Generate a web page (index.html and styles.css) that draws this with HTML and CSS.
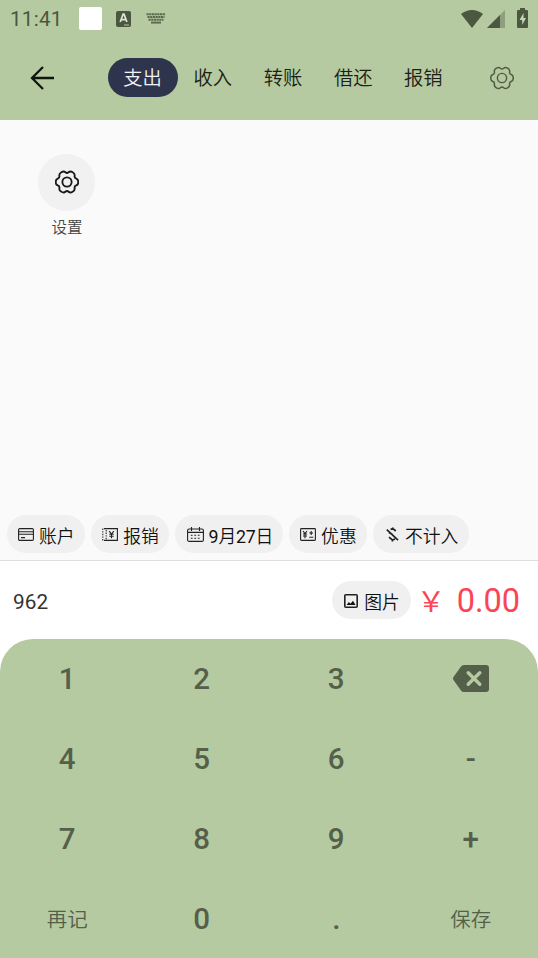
FILE: index.html
```html
<!DOCTYPE html>
<html lang="zh-CN">
<head>
<meta charset="utf-8">
<title>记账</title>
<link rel="stylesheet" href="styles.css">
</head>
<body>
<svg class="defs" aria-hidden="true">
  <symbol id="gear" viewBox="-13 -13 26 26">
    <path d="M12.23 0Q12.23 3.05 10.01 3.78Q7.79 4.5 8.27 6.78Q8.75 9.06 6.11 10.59Q3.47 12.11 1.74 10.56Q0 9-1.74 10.56Q-3.47 12.11-6.11 10.59Q-8.75 9.06-8.27 6.78Q-7.79 4.5-10.01 3.78Q-12.23 3.05-12.23 0Q-12.23-3.05-10.01-3.78Q-7.79-4.5-8.27-6.78Q-8.75-9.06-6.11-10.59Q-3.47-12.11-1.74-10.56Q0-9 1.74-10.56Q3.47-12.11 6.11-10.59Q8.75-9.06 8.27-6.78Q7.79-4.5 10.01-3.78Q12.23-3.05 12.23 0Z"/>
    <circle r="5"/>
  </symbol>
</svg>
<header class="header">
  <div class="status">
    <span class="clock">11:41</span>
    <span class="notice"></span>
    <svg class="ime" width="15" height="16" viewBox="0 0 15 16"><rect width="15" height="16" rx="2" fill="#4b573f"/><path d="M4.2 11 7.1 3.2h.9L10.9 11M5.2 8.6h4.6" fill="none" stroke="#dce6d2" stroke-width="1.7"/><path d="M8 14h5" stroke="#b5caa0"/></svg>
    <svg class="keyboard" width="20" height="11" viewBox="0 0 20 11" fill="none" stroke="#5c694e" stroke-width="1.9"><path d="M.5 1.2h19" stroke-dasharray="2.2 .5"/><path d="M1.5 4h17M2.5 6.8h15" stroke-dasharray="2.2 .5"/><path d="M5 9.6h10"/></svg>
    <span class="signals">
      <svg width="22" height="18" viewBox="0 0 22 18"><path d="M0 4Q11-4 22 4L11 18Z" fill="#4b573f"/></svg>
      <svg width="18" height="18" viewBox="0 0 18 18"><path d="M0 18 18 0v18Z" fill="#8d9f7c"/><path d="M0 18 13 5v13Z" fill="#4b573f"/></svg>
      <svg class="battery" width="11" height="20" viewBox="0 0 11 20"><path d="M3 0h5v2h2q1 0 1 1v16q0 1-1 1H1q-1 0-1-1V3q0-1 1-1h2Z" fill="#4b573f"/><path d="M6.5 5 2.5 12h2.7v5l3.8-7H6.5Z" fill="#c5d5b5"/></svg>
    </span>
  </div>
  <nav class="toolbar">
    <svg class="back" width="24" height="24" viewBox="0 0 24 24" fill="none" stroke="#11150e" stroke-width="2.3"><path d="M24 12H2M13 1 2 12l11 11"/></svg>
    <div class="tabs">
      <span class="tab active">支出</span><span class="tab">收入</span><span class="tab">转账</span><span class="tab">借还</span><span class="tab">报销</span>
    </div>
    <svg class="gear toolbar-gear" width="24" height="24"><use href="#gear"/></svg>
  </nav>
</header>
<main class="content">
  <div class="category">
    <span class="category-icon"><svg class="gear" width="24" height="24"><use href="#gear"/></svg></span>
    <span class="category-name">设置</span>
  </div>
  <div class="chips">
    <span class="chip"><svg width="16" height="13" viewBox="0 0 16 13"><rect x=".6" y=".6" width="14.8" height="11.8" rx="1.2"/><path d="M.6 3.7h14.8M.6 6.2h14.8M3 9.6h4"/></svg>账户</span>
    <span class="chip"><svg width="16" height="13" viewBox="0 0 16 13"><path d="M2 .6h13.4v11.8H2"/><path d="M.8.6v12M4.2 2v10" stroke-dasharray="1.4 1.2"/><path d="m7.2 3.2 2.3 2.9 2.3-2.9M9.5 6v4.2M7.3 6.3h4.4M7.3 8.3h4.4"/></svg>报销</span>
    <span class="chip date"><svg width="17" height="15" viewBox="0 0 17 15"><rect x=".6" y="2" width="15.8" height="12.4" rx="1.5"/><path d="M.6 5.4h15.8M4.5 0v4M12.5 0v4"/><path d="M3.8 8.3h10M3.8 11.2h10" stroke-dasharray="1.8 1.7"/></svg><span>9<span class="han">月</span>27<span class="han">日</span></span></span>
    <span class="chip"><svg width="16" height="13" viewBox="0 0 16 13"><rect x=".6" y=".6" width="14.8" height="11.8" rx=".8"/><path d="m3 3 2 2.5L7 3M5 5.5v4.7M3 6h4M3 8h4M11.2 3v4M9.3 5h3.8M9.3 9.3h4"/></svg>优惠</span>
    <span class="chip exclude"><svg width="13" height="15" viewBox="0 0 13 15"><path d="M.8 2.6 12 13.2M4.6 2.6 6.8 1.6 9.8 4M6.8.6v1.6M3 10.2l3.4 2.8L9 12M6.4 12.6v1.8M3 5.4 6.4 7.4"/></svg>不计入</span>
  </div>
</main>
<section class="entry">
  <span class="note">962</span>
  <span class="chip photo"><svg width="14" height="14" viewBox="0 0 14 14"><rect x=".8" y=".8" width="12.4" height="12.4" rx="1"/><path class="hill" d="m2.6 11 2.3-3 1.6 1.8L9 6.8 11.5 11Z"/></svg>图片</span>
  <span class="currency">￥</span>
  <span class="amount">0.00</span>
</section>
<section class="keypad">
  <span class="key">1</span><span class="key">2</span><span class="key">3</span>
  <span class="key"><svg class="erase" width="36" height="27" viewBox="0 0 36 27"><path d="M11 0h22q3 0 3 3v21q0 3-3 3H11q-2 0-3-1.5L.5 15q-1-1.5 0-3L8 1.5Q9 0 11 0Z" fill="#54604a"/><path d="m15.2 7.7 11.6 11.6m0-11.6L15.2 19.3" stroke="#b5caa0" stroke-width="3.4" stroke-linecap="round"/></svg></span>
  <span class="key">4</span><span class="key">5</span><span class="key">6</span><span class="key">-</span>
  <span class="key">7</span><span class="key">8</span><span class="key">9</span><span class="key">+</span>
  <span class="key action">再记</span><span class="key">0</span><span class="key">.</span><span class="key action">保存</span>
</section>
</body>
</html>
```
FILE: styles.css
```css
* { box-sizing: border-box; }
body {
  margin: 0;
  width: 538px;
  height: 958px;
  display: flex;
  flex-direction: column;
  overflow: hidden;
  background: #fff;
  color: #111;
  font-family: Roboto, "Noto Sans CJK SC", sans-serif;
}
svg { display: block; flex: none; }
.defs { position: absolute; width: 0; height: 0; }
.header { height: 120px; flex: none; background: #b5caa0; }
.status { display: flex; align-items: center; height: 37px; padding: 0 10px; }
.clock { width: 69px; color: #4b573f; font-size: 20.5px; letter-spacing: .3px; }
.notice { width: 23px; height: 23px; border-radius: 2px; background: #fff; }
.ime { margin-left: 14px; }
.keyboard { margin-left: 15px; }
.signals { display: flex; align-items: center; margin-left: auto; gap: 4px; }
.battery { margin: -2px 0 0 8px; }
.toolbar { display: flex; align-items: center; height: 81px; padding: 0 24px 0 30px; }
.tabs { display: flex; margin-left: 53.5px; }
.tab {
  display: flex; align-items: center; justify-content: center;
  width: 70.2px; height: 39px; padding-bottom: 2px; border-radius: 20px;
  font-size: 19.3px; font-weight: 350; color: #1b2016;
}
.tab.active { background: #2d344b; color: #f1f2f5; }
.gear { fill: none; stroke: #1a1a1a; stroke-width: 2; }
.toolbar-gear { margin-left: auto; stroke: #4f5c43; stroke-width: 1.6; }
.content {
  display: flex; flex-direction: column; justify-content: space-between;
  height: 441px; flex: none; padding: 34px 6.5px 7px;
  background: #fafafa; border-bottom: 1px solid #dedede;
}
.category { display: flex; flex-direction: column; align-items: center; width: 120px; }
.category-icon {
  display: flex; align-items: center; justify-content: center;
  width: 57px; height: 57px; padding-bottom: 2px; border-radius: 50%; background: #f1f1f1;
}
.category-name { margin: 6px 0 0 1px; font-size: 15.5px; line-height: 23px; font-weight: 350; color: #444; }
.chips { display: flex; gap: 6px; }
.chip {
  display: flex; align-items: center; gap: 5px;
  width: 78.3px; height: 38px; padding: 1px 0 0 11.5px; border-radius: 19px;
  background: #f0f0f0; font-size: 17.8px; font-weight: 350; white-space: nowrap;
}
.chip svg { fill: none; stroke: #222; stroke-width: 1.1; }
.chip.date { width: 107.5px; font-weight: 400; letter-spacing: -.2px; }
.han { font-weight: 350; }
.chip.exclude { width: 96px; padding-left: 13px; gap: 6px; }
.chip.exclude svg { stroke-width: 1.7; }
.entry { display: flex; align-items: center; height: 78px; flex: none; padding: 0 18px 0 13px; }
.note { flex: 1; padding-top: 3px; font-size: 20.8px; color: #333; }
.chip.photo { padding-left: 12px; gap: 6px; margin-right: 6px; }
.chip.photo svg { stroke-width: 1.6; }
.chip.photo .hill { fill: #111; stroke: none; }
.currency { width: 40px; font-family: "Noto Sans CJK SC", sans-serif; font-size: 28.5px; line-height: 40px; color: #fb4455; }
.amount { padding-top: 1px; font-size: 32.5px; color: #fb4455; }
.keypad {
  display: grid; grid-template: repeat(4, 80px) / repeat(4, 1fr);
  height: 319px; flex: none;
  border-radius: 33px 33px 0 0; background: #b5caa0;
}
.key {
  display: flex; align-items: center; justify-content: center;
  color: #54604a; font-size: 29.5px; font-weight: 500;
}
.erase { margin-top: -1px; }
.key.action { padding-bottom: 2px; font-size: 20.5px; font-weight: 350; }
```
